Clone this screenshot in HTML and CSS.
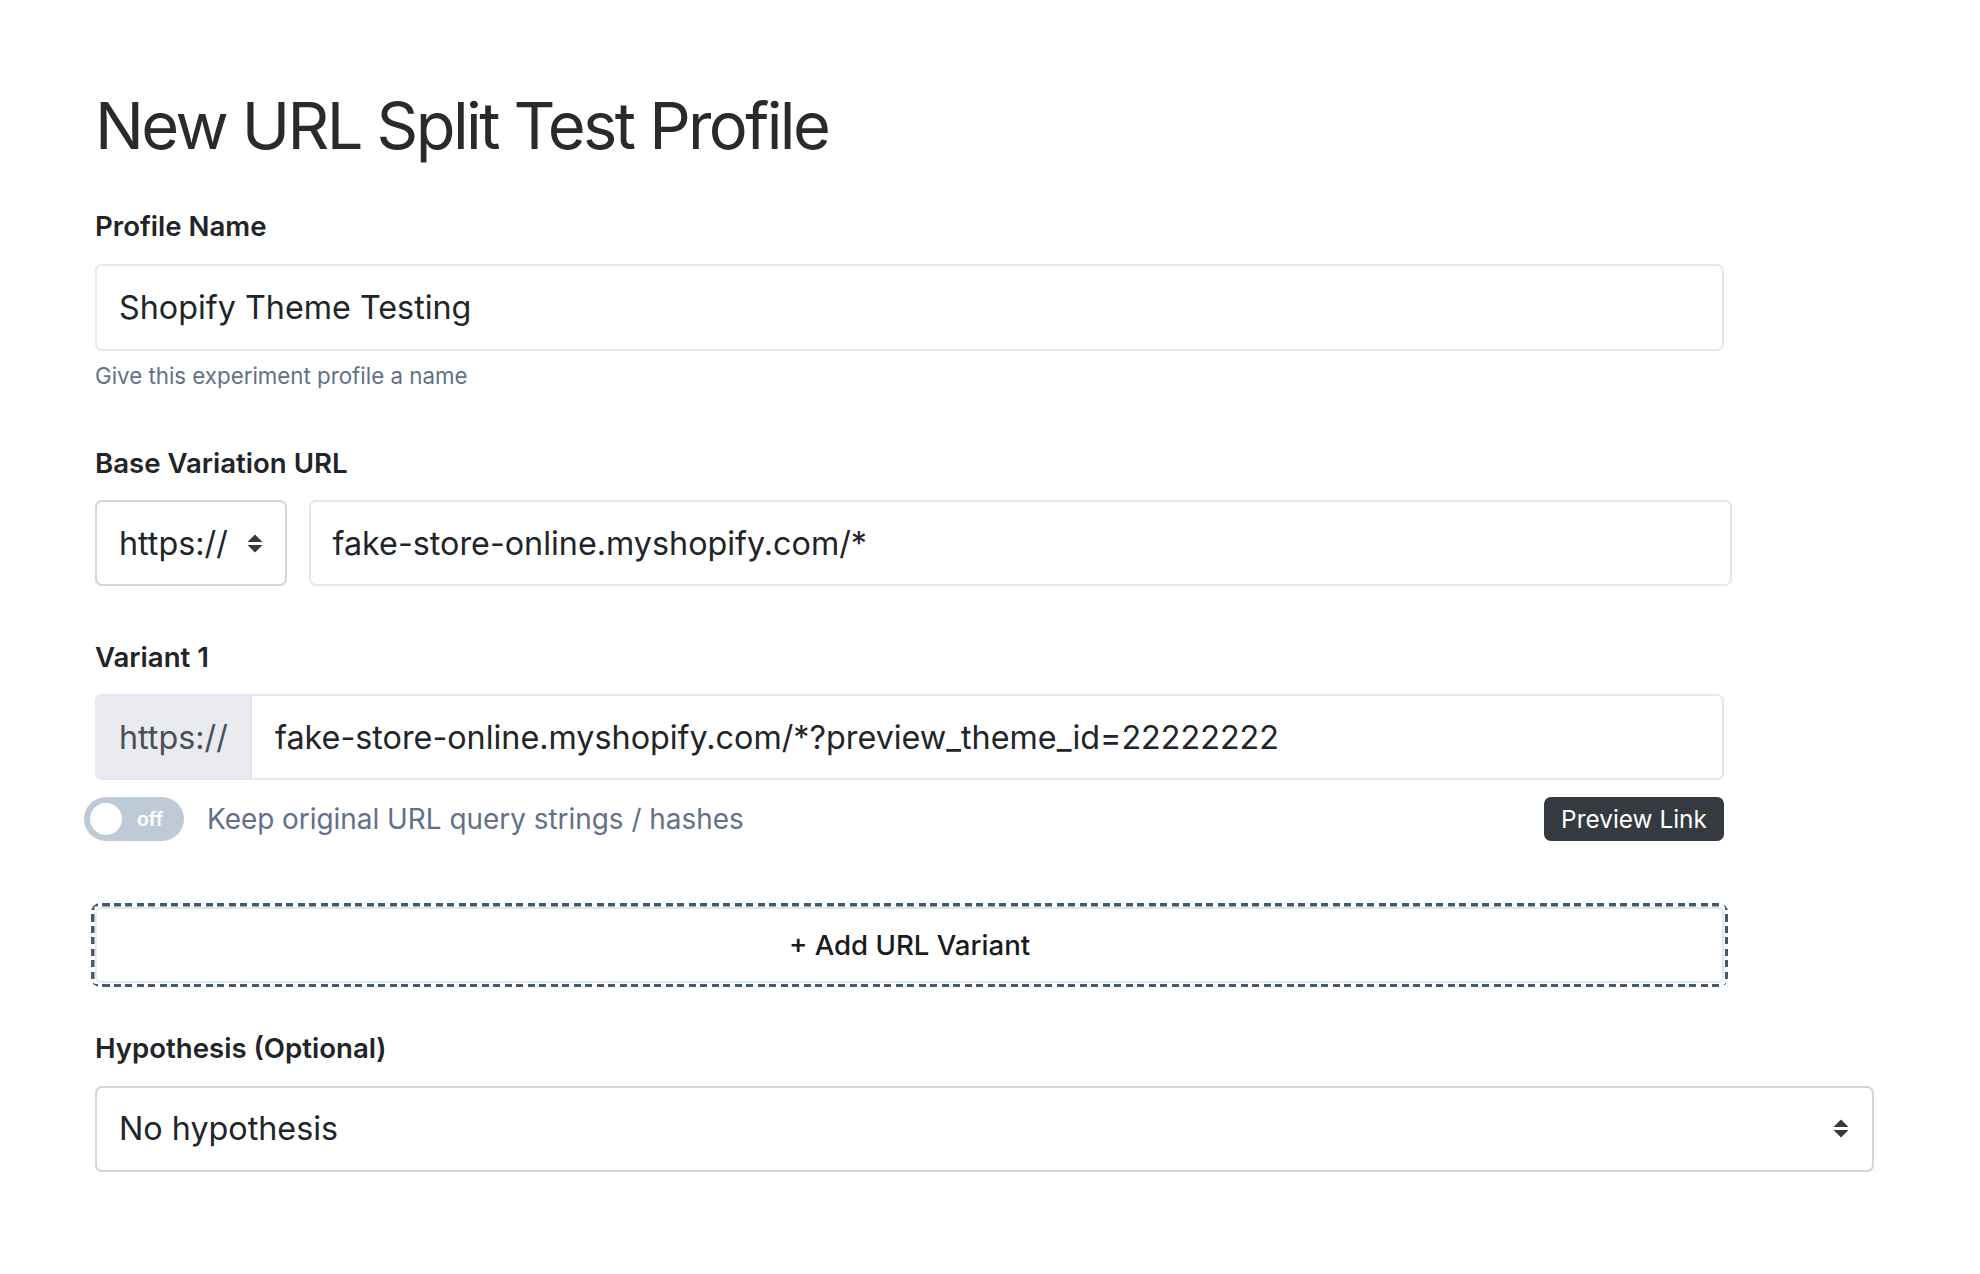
FILE: index.html
```html
<!DOCTYPE html>
<html lang="en">
<head>
<meta charset="utf-8">
<title>New URL Split Test Profile</title>
<link rel="stylesheet" href="styles.css">
</head>
<body>
<main class="page">
  <h1 class="title">New URL Split Test Profile</h1>

  <section class="field">
    <div class="field-label">Profile Name</div>
    <div class="text-input">Shopify Theme Testing</div>
    <p class="help">Give this experiment profile a name</p>
  </section>

  <section class="field">
    <div class="field-label">Base Variation URL</div>
    <div class="base-row">
      <div class="select select-small">
        <span>https://</span>
        <svg class="updown" viewBox="0 0 16 19" width="16" height="19"><polygon points="8,0.5 15.5,8 0.5,8" fill="#343a40"/><polygon points="0.5,11 15.5,11 8,18.5" fill="#343a40"/></svg>
      </div>
      <div class="text-input base-input">fake-store-online.myshopify.com/*</div>
    </div>
  </section>

  <section class="field variant">
    <div class="field-label">Variant 1</div>
    <div class="input-group">
      <div class="prefix">https://</div>
      <div class="group-value">fake-store-online.myshopify.com/*?preview_theme_id=22222222</div>
    </div>
    <div class="toggle-row">
      <div class="toggle-wrap">
        <div class="toggle"><span class="knob"></span><span class="toggle-text">off</span></div>
        <span class="toggle-label">Keep original URL query strings / hashes</span>
      </div>
      <div class="preview-btn">Preview Link</div>
    </div>
  </section>

  <div class="add-frame">
    <div class="add-btn">+ Add URL Variant</div>
  </div>

  <section class="field hypothesis">
    <div class="field-label">Hypothesis (Optional)</div>
    <div class="select select-wide">
      <span>No hypothesis</span>
      <svg class="updown" viewBox="0 0 16 19" width="16" height="19"><polygon points="8,0.5 15.5,8 0.5,8" fill="#343a40"/><polygon points="0.5,11 15.5,11 8,18.5" fill="#343a40"/></svg>
    </div>
  </section>
</main>
</body>
</html>
```

FILE: styles.css
```css
* { box-sizing: border-box; }

body {
  margin: 0;
  background: #ffffff;
  color: #212529;
  font-family: Inter, "Noto Sans", "Liberation Sans", sans-serif;
}

.page {
  padding: 87px 0 60px 95px;
}

.title {
  margin: 0 0 41px;
  font-size: 65px;
  line-height: 78px;
  font-weight: 400;
  letter-spacing: -0.04em;
  color: #2a2a2a;
}

.field {
  margin: 0 0 50.5px;
}

.field-label {
  font-size: 27.6px;
  line-height: 40px;
  font-weight: 600;
  color: #212529;
  margin-bottom: 17.6px;
}

.text-input {
  width: 1629px;
  height: 87px;
  border: 2px solid #e4e8ee;
  border-radius: 7px;
  padding: 0 22px;
  display: flex;
  align-items: center;
  font-size: 32.3px;
  color: #212529;
  background: #fff;
}

.help {
  margin: 9.7px 0 0;
  font-size: 22.3px;
  line-height: 32px;
  color: #607189;
}

.base-row {
  display: flex;
  gap: 21.5px;
  width: 1637px;
}

.select {
  height: 86px;
  border: 2px solid #d1d6dc;
  border-radius: 7px;
  padding: 0 22px;
  display: flex;
  align-items: center;
  justify-content: space-between;
  font-size: 32.3px;
  color: #212529;
  background: #fff;
}

.select-small {
  width: 192px;
  flex: none;
}

.base-input {
  flex: 1;
  width: auto;
  height: 86px;
}

.input-group {
  width: 1629px;
  height: 86px;
  display: flex;
  border: 2px solid #e4e8ee;
  border-radius: 7px;
  overflow: hidden;
  font-size: 32.3px;
}

.prefix {
  width: 155px;
  flex: none;
  background: #e9ebef;
  border-right: 2px solid #dfe3e8;
  color: #4a5058;
  display: flex;
  align-items: center;
  padding-left: 22px;
}

.group-value {
  flex: 1;
  display: flex;
  align-items: center;
  padding-left: 23px;
  color: #212529;
}

.toggle-row {
  width: 1640px;
  margin: 17px 0 0 -11px;
  display: flex;
  align-items: center;
  justify-content: space-between;
}

.toggle-wrap {
  display: flex;
  align-items: center;
}

.toggle {
  width: 100px;
  height: 44px;
  border-radius: 22px;
  background: #bfcad8;
  display: flex;
  align-items: center;
}

.knob {
  width: 32px;
  height: 32px;
  border-radius: 50%;
  background: #fff;
  margin-left: 6px;
}

.toggle-text {
  margin-left: 15px;
  font-size: 19.5px;
  font-weight: 600;
  color: #fff;
}

.toggle-label {
  margin-left: 23px;
  font-size: 27.9px;
  color: #607189;
}

.preview-btn {
  width: 180px;
  height: 44px;
  border-radius: 7px;
  background: #343a40;
  color: #fff;
  font-size: 24.4px;
  display: flex;
  align-items: center;
  justify-content: center;
}

.variant {
  margin-bottom: 62px;
}

.add-frame {
  width: 1637px;
  height: 84px;
  margin: 0 0 40.7px -4px;
  padding: 4px;
  border-radius: 9px;
  background:
    repeating-linear-gradient(90deg, #44586e 0 7px, transparent 7px 11.5px) top left / 100% 3.5px no-repeat,
    repeating-linear-gradient(90deg, #44586e 0 7px, transparent 7px 11.5px) bottom left / 100% 3.5px no-repeat,
    repeating-linear-gradient(180deg, #44586e 0 7px, transparent 7px 11.5px) top left / 3.5px 100% no-repeat,
    repeating-linear-gradient(180deg, #44586e 0 7px, transparent 7px 11.5px) top right / 3.5px 100% no-repeat;
}

.add-btn {
  height: 76px;
  border: 2px solid #e4e8ee;
  border-radius: 6px;
  display: flex;
  align-items: center;
  justify-content: center;
  font-size: 27.6px;
  font-weight: 500;
  color: #1a1a1a;
  background: #fff;
}

.select-wide {
  width: 1779px;
  padding-right: 23px;
}
```
